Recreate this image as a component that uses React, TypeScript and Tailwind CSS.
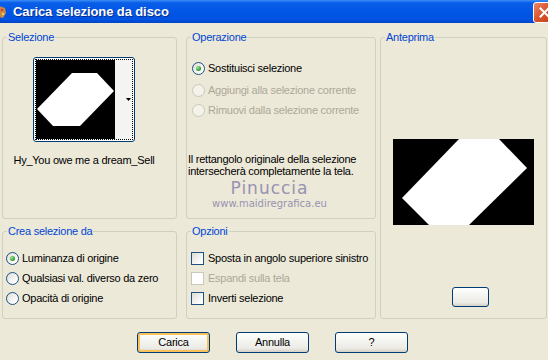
import type { ReactNode } from "react";

const FONT = "font-['Liberation_Sans',Arial,sans-serif] tracking-[-0.25px]";

const GroupBox = ({
  label,
  className,
  children,
}: {
  label: string;
  className: string;
  children?: ReactNode;
}) => (
  <div
    className={`relative rounded-[3px] border border-[#D0D0BF] ${className}`}
  >
    <span className="absolute -top-[8px] left-[4px] whitespace-nowrap bg-[#ECE9D8] px-[1px] text-[11px] leading-[14px] text-[#0046D5]">
      {label}
    </span>
    {children}
  </div>
);

const Radio = ({
  label,
  checked = false,
  disabled = false,
}: {
  label: string;
  checked?: boolean;
  disabled?: boolean;
}) => (
  <div className="flex h-[20px] items-center whitespace-nowrap">
    <span
      className={`flex h-[13px] w-[13px] shrink-0 items-center justify-center rounded-full border ${
        disabled
          ? "border-[#CAC8BB] bg-[#F4F3EA]"
          : "border-[#1C5180] bg-[linear-gradient(135deg,#DCDCD7_0%,#FFFFFF_80%)]"
      }`}
    >
      {checked && (
        <span className="h-[5px] w-[5px] rounded-full bg-[radial-gradient(circle_at_35%_35%,#A6E59A_0%,#2FA32F_60%,#1F8A1F_100%)]" />
      )}
    </span>
    <span
      className={`ml-[3px] text-[11px] ${
        disabled ? "text-[#ACA899]" : "text-black"
      }`}
    >
      {label}
    </span>
  </div>
);

const Check = ({
  label,
  disabled = false,
}: {
  label: string;
  disabled?: boolean;
}) => (
  <div className="flex h-[20px] items-center whitespace-nowrap">
    <span
      className={`h-[13px] w-[13px] shrink-0 border ${
        disabled
          ? "border-[#CAC8BB] bg-white"
          : "border-[#1C5180] bg-[linear-gradient(135deg,#DCDCD7_0%,#FFFFFF_85%)]"
      }`}
    />
    <span
      className={`ml-[4px] text-[11px] ${
        disabled ? "text-[#ACA899]" : "text-black"
      }`}
    >
      {label}
    </span>
  </div>
);

const XpButton = ({
  label,
  isDefault = false,
  className = "",
}: {
  label?: string;
  isDefault?: boolean;
  className?: string;
}) => (
  <button
    className={`flex items-center justify-center rounded-[3px] border border-[#003C74] bg-[linear-gradient(to_bottom,#FFFFFF_0%,#F4F4F0_40%,#ECEBE6_80%,#D6D0C5_100%)] text-[11px] text-black ${
      isDefault ? "shadow-[inset_0_0_0_2px_#F9C15B]" : ""
    } ${className}`}
  >
    {label}
  </button>
);

export default function App() {
  return (
    <div
      className={`flex h-[360px] w-[548px] flex-col overflow-hidden bg-[#ECE9D8] ${FONT}`}
    >
      {/* Title bar */}
      <div className="flex h-[23px] shrink-0 items-center overflow-hidden bg-[linear-gradient(to_bottom,#3D8EF7_0%,#0A5FE8_12%,#0056E6_50%,#0053E2_85%,#0043C6_100%)]">
        <svg width="8" height="16" viewBox="0 0 8 16" className="-ml-[1px]">
          <path d="M0 2 L6 4 L7 9 L4 14 L0 13 Z" fill="#C8884A" />
          <circle cx="3" cy="6" r="1.3" fill="#E23A2A" />
          <circle cx="4" cy="10" r="1.2" fill="#F1D54A" />
        </svg>
        <span className="ml-[6px] text-[13px] font-bold tracking-[-0.1px] text-white [text-shadow:1px_1px_0_#0A2A8A]">
          Carica selezione da disco
        </span>
        <div className="ml-auto -mr-[7px] mt-[1px] flex h-[21px] w-[22px] items-center justify-center rounded-[3px] border border-white bg-[linear-gradient(135deg,#E9876B_0%,#D9532B_50%,#C23F1A_100%)]">
          <svg width="11" height="11" viewBox="0 0 11 11">
            <path
              d="M1.5 1.5 L9.5 9.5 M9.5 1.5 L1.5 9.5"
              stroke="white"
              strokeWidth="2"
              strokeLinecap="square"
            />
          </svg>
        </div>
      </div>

      {/* Group boxes */}
      <div className="flex pl-[2px] pt-[14px]">
        {/* Left column */}
        <div className="flex w-[175px] flex-col gap-[12px]">
          <GroupBox label="Selezione" className="h-[182px]">
            <div className="flex w-[162px] flex-col items-center pt-[19px]">
              <div className="flex h-[85px] w-[102px] rounded-[3px] border border-[#003C74] bg-white p-[1px]">
                <div className="flex h-full w-full border border-dotted border-black">
                  <svg width="79" height="79" viewBox="0 0 79 79" className="shrink-0">
                    <rect width="79" height="79" fill="black" />
                    <polygon
                      points="36,13 61,13 78,31 44,66 17,66 1,49"
                      fill="white"
                    />
                  </svg>
                  <div className="flex flex-1 items-center justify-end bg-[#F4F4F2] pr-[1px]">
                    <svg width="5" height="3" viewBox="0 0 5 3">
                      <path d="M0 0 H5 L2.5 3 Z" fill="black" />
                    </svg>
                  </div>
                </div>
              </div>
              <span className="mt-[10px] whitespace-nowrap text-[11px] text-black">
                Hy_You owe me a dream_Sell
              </span>
            </div>
          </GroupBox>
          <GroupBox label="Crea selezione da" className="h-[88px]">
            <div className="flex flex-col pl-[3px] pt-[16px]">
              <Radio label="Luminanza di origine" checked />
              <Radio label="Qualsiasi val. diverso da zero" />
              <Radio label="Opacità di origine" />
            </div>
          </GroupBox>
        </div>

        {/* Middle column */}
        <div className="ml-[9px] flex w-[190px] flex-col gap-[12px]">
          <GroupBox label="Operazione" className="h-[182px]">
            <div className="flex flex-col pl-[5px] pt-[20px]">
              <Radio label="Sostituisci selezione" checked />
              <div className="mt-[2px]">
                <Radio label="Aggiungi alla selezione corrente" disabled />
              </div>
              <Radio label="Rimuovi dalla selezione corrente" disabled />
            </div>
            <p className="mt-[33px] whitespace-nowrap pl-[1px] text-[11px] leading-[12px] text-black">
              Il rettangolo originale della selezione
              <br />
              intersecherà completamente la tela.
            </p>
            {/* watermark */}
            <div className="pointer-events-none absolute left-[20px] top-[142px] flex w-[125px] flex-col items-center leading-none tracking-normal text-[#8F8AAE] opacity-90">
              <span className="font-['DejaVu_Sans',sans-serif] text-[17px] tracking-[1px]">
                Pinuccia
              </span>
              <span className="mt-[2px] font-['DejaVu_Sans',sans-serif] text-[10px]">
                www.maidiregrafica.eu
              </span>
            </div>
          </GroupBox>
          <GroupBox label="Opzioni" className="h-[88px]">
            <div className="flex flex-col pl-[4px] pt-[16px]">
              <Check label="Sposta in angolo superiore sinistro" />
              <Check label="Espandi sulla tela" disabled />
              <Check label="Inverti selezione" />
            </div>
          </GroupBox>
        </div>

        {/* Right column */}
        <div className="ml-[4px] w-[167px]">
          <GroupBox label="Anteprima" className="flex h-[282px] flex-col items-center">
            <svg
              width="141"
              height="86"
              viewBox="0 0 141 86"
              className="mt-[101px] -ml-[1px]"
            >
              <rect width="141" height="86" fill="black" />
              <polygon
                points="66,0 106,0 134,29 76,86 36,86 9,59"
                fill="white"
              />
            </svg>
            <XpButton className="mt-[62px] ml-[13px] h-[20px] w-[37px]" />
          </GroupBox>
        </div>
      </div>

      {/* Buttons */}
      <div className="ml-[137px] mt-[13px] flex gap-[26px]">
        <XpButton label="Carica" isDefault className="h-[21px] w-[73px]" />
        <XpButton label="Annulla" className="h-[21px] w-[73px]" />
        <XpButton label="?" className="h-[21px] w-[73px]" />
      </div>
    </div>
  );
}
